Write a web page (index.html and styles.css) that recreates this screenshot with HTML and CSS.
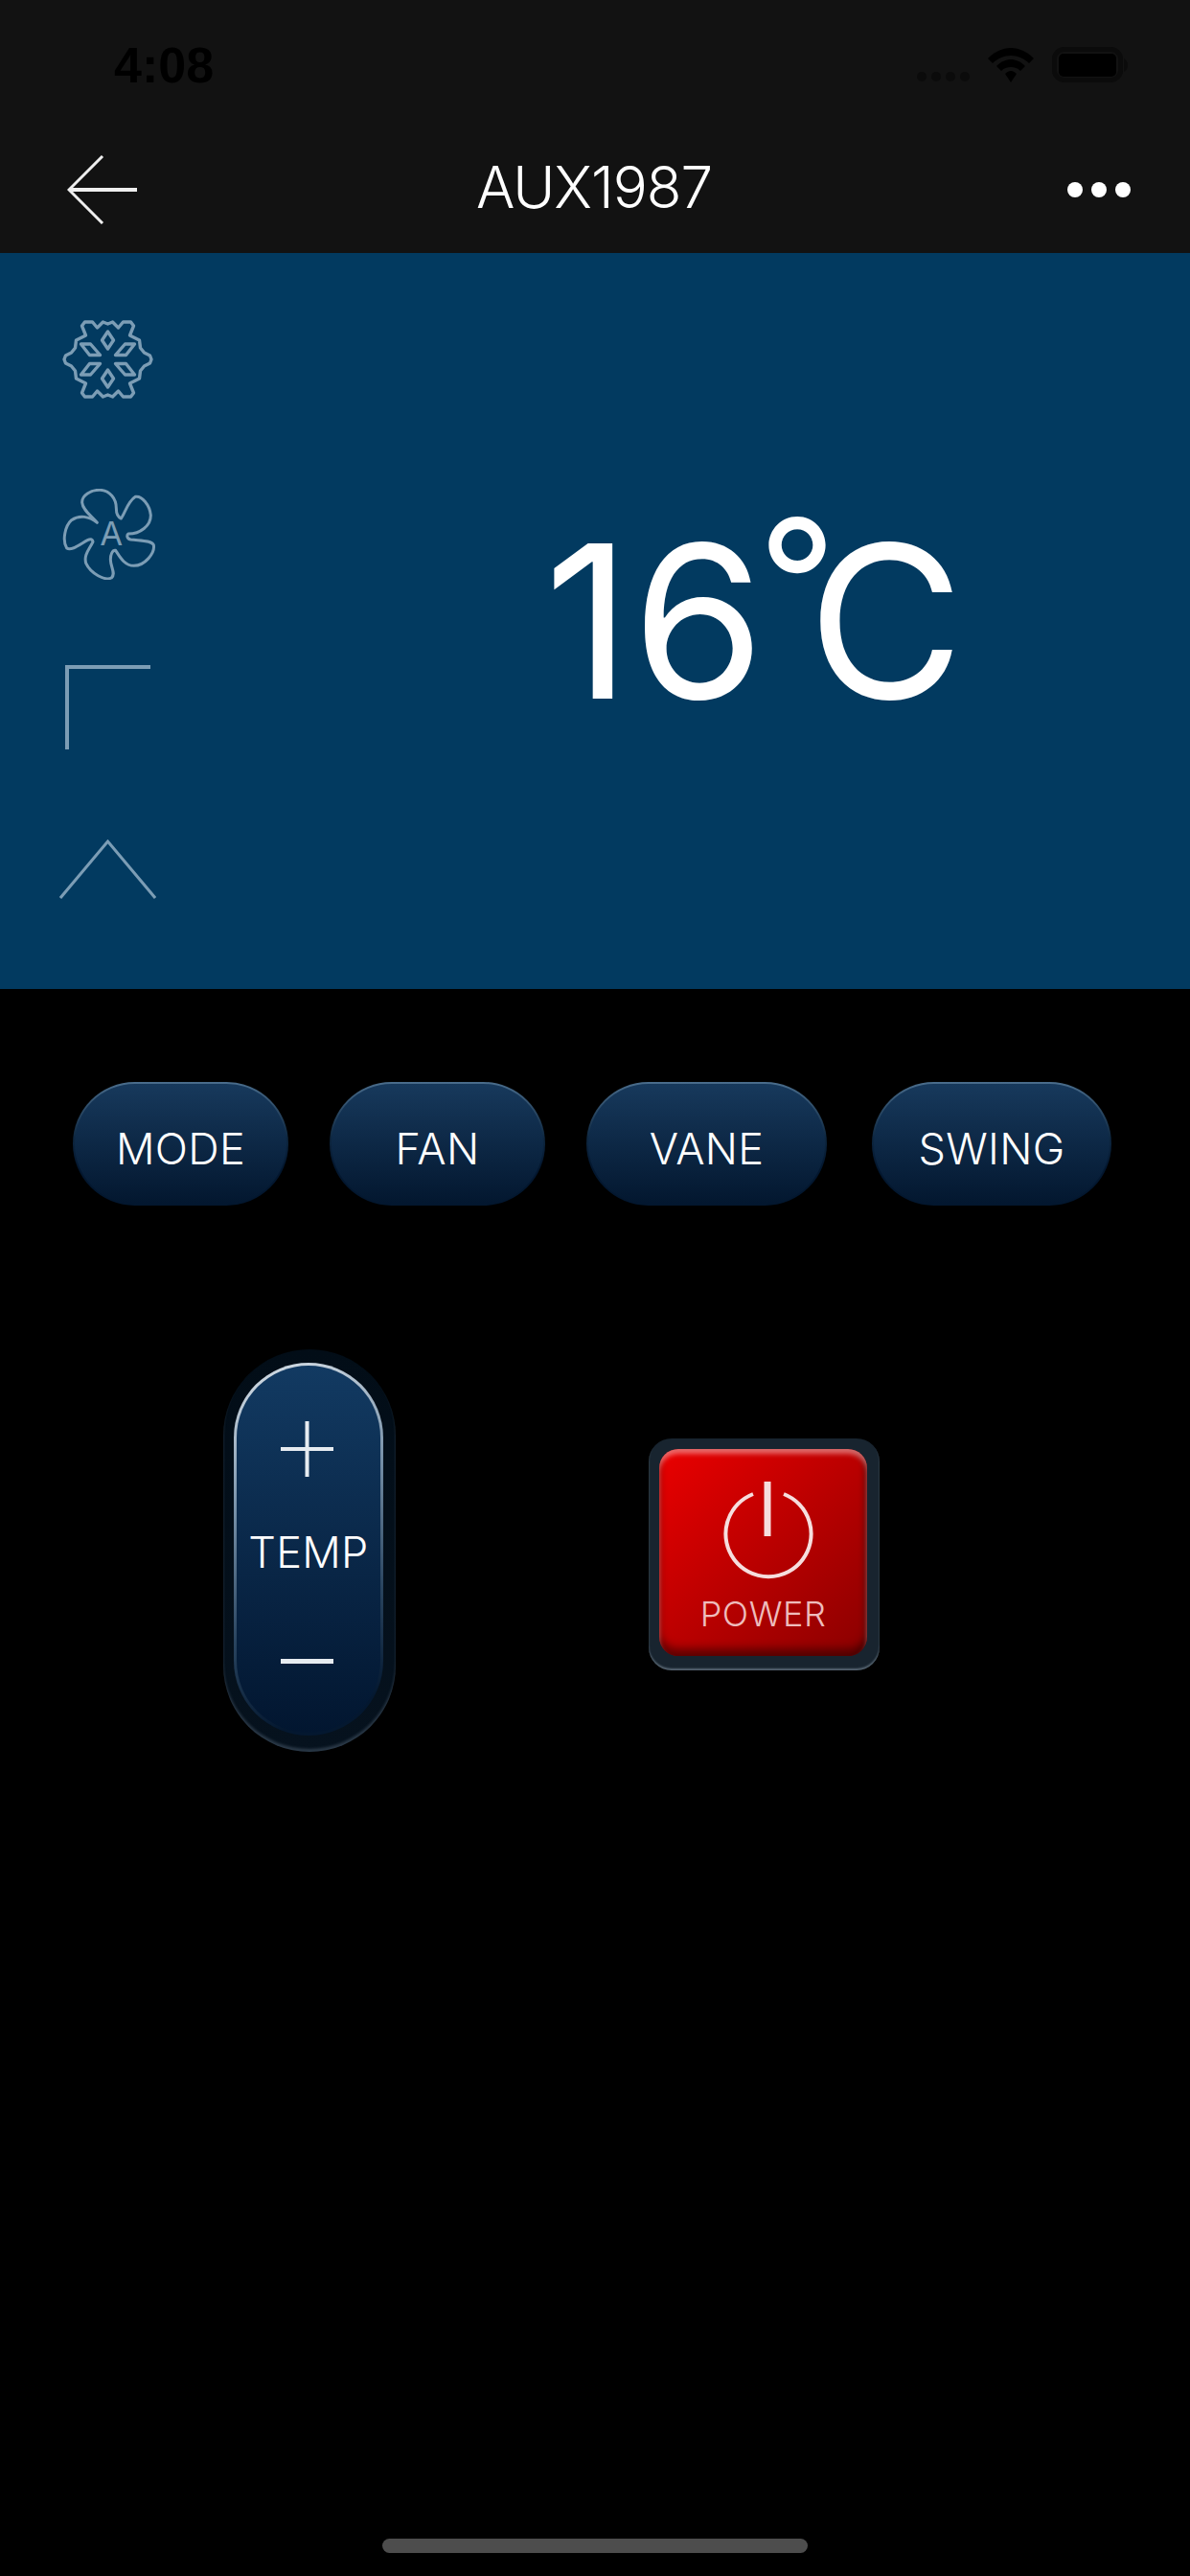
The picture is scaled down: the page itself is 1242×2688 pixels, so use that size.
FILE: index.html
```
<!DOCTYPE html>
<html lang="en">
<head>
    <meta charset="UTF-8">
    <meta name="viewport" content="width=device-width, initial-scale=1.0">
    <title>AUX1987</title>
    <link rel="stylesheet" href="styles.css">
</head>
<body>
    <div class="page">
        <div class="header">
            <div class="status">
                <span class="time">4:08</span>
                <svg class="status-icons" width="220" height="38" viewBox="0 0 220 38">
                    <circle cx="5" cy="31" r="5" fill="#0b0b0b"/>
                    <circle cx="20" cy="31" r="5" fill="#0b0b0b"/>
                    <circle cx="35" cy="31" r="5" fill="#0b0b0b"/>
                    <circle cx="50" cy="31" r="5" fill="#0b0b0b"/>
                    <path d="M98 1C107 1 115 5 122 12L117 17C112 12 105 9 98 9S84 12 79 17L74 12C81 5 89 1 98 1Z" fill="#000"/>
                    <path d="M98 13C103 13 108 15 113 20L108 25C105 22 102 21 98 21S91 22 88 25L83 20C88 15 93 13 98 13Z" fill="#000"/>
                    <path d="M98 25C100 25 102 26 104 28L98 37L92 28C94 26 96 25 98 25Z" fill="#000"/>
                    <rect x="143.5" y="2.5" width="69" height="32" rx="10" fill="none" stroke="#0b0b0b" stroke-width="5"/>
                    <rect x="148" y="7" width="60" height="24" rx="5" fill="#000"/>
                    <path d="M216 12C219 14 220 16 220 19S219 24 216 26Z" fill="#0b0b0b"/>
                </svg>
            </div>
            <div class="nav">
                <svg class="back" width="73" height="72" viewBox="0 0 73 72">
                    <path d="M37 1L2 36L37 71" fill="none" stroke="#eee" stroke-width="3"/>
                    <path d="M3 36H73" fill="none" stroke="#eee" stroke-width="4"/>
                </svg>
                <div class="title">AUX1987</div>
                <div class="more">
                    <span class="dot"></span>
                    <span class="dot"></span>
                    <span class="dot"></span>
                </div>
            </div>
        </div>

        <div class="panel">
            <div class="state-icons">
                <svg class="ic-snow" width="101" height="84" viewBox="-50.5 -42 101 84">
                    <g class="line-icon">
                        <path d="M0 -37L5 -39L11 -33L16 -39L24 -39L27 -35L23 -25L33 -20L34 -12L38 -7L44 -4L45.5 0L44 4L38 7L34 12L33 20L23 25L27 35L24 39L16 39L11 33L5 39L0 37L-5 39L-11 33L-16 39L-24 39L-27 35L-23 25L-33 20L-34 12L-38 7L-44 4L-45.5 0L-44 -4L-38 -7L-34 -12L-33 -20L-23 -25L-27 -35L-24 -39L-16 -39L-11 -33L-5 -39Z"/>
                        <path d="M0 -29L6 -20L0 -11L-6 -20Z"/>
                        <path d="M0 29L6 20L0 11L-6 20Z"/>
                        <path d="M8 -4.5L18 -16L28 -16L19 -4.5Z"/>
                        <path d="M-8 -4.5L-18 -16L-28 -16L-19 -4.5Z"/>
                        <path d="M8 4.5L18 16L28 16L19 4.5Z"/>
                        <path d="M-8 4.5L-18 16L-28 16L-19 4.5Z"/>
                    </g>
                </svg>
                <svg class="ic-fan" width="101" height="95" viewBox="92 629 303 285">
                    <path class="fan-blades" d="M210 735C190 712 165 695 163 672C162 650 190 632 220 633C250 635 270 660 270 690C270 705 275 718 285 722C298 705 305 670 330 654C350 650 375 680 378 712C378 745 345 770 308 770C302 775 303 785 315 788C345 792 380 790 387 805C392 830 360 870 325 870C295 870 280 840 268 822C258 820 252 835 252 850C252 875 270 895 255 908C235 918 190 895 175 862C168 835 185 820 197 795C195 785 188 786 180 790C160 800 130 825 115 815C100 790 110 745 130 727C155 710 185 715 210 735Z"/>
                    <text class="fan-letter" x="255" y="805" text-anchor="middle">A</text>
                </svg>
                <svg class="ic-corner" width="101" height="88" viewBox="0 0 101 88">
                    <path d="M8 88V2H95" fill="none" stroke="#7c9db5" stroke-width="4"/>
                </svg>
                <svg class="ic-chevron" width="101" height="62" viewBox="0 0 101 62">
                    <path d="M1 61L50.5 2L100 61" fill="none" stroke="#7c9db5" stroke-width="3"/>
                </svg>
            </div>
            <div class="temp-value"><span class="one">1</span><span class="six">6</span><span class="deg">°</span>C</div>
        </div>

        <div class="buttons">
            <div class="pill">MODE</div>
            <div class="pill">FAN</div>
            <div class="pill vane">VANE</div>
            <div class="pill swing">SWING</div>
        </div>

        <div class="controls">
            <div class="temp-shell">
                <div class="temp-btn">
                    <svg class="plus" width="55" height="58" viewBox="0 0 55 58">
                        <path d="M0 29H55M27.5 0V58" fill="none" stroke="#e6ebf0" stroke-width="4"/>
                    </svg>
                    <div class="temp-label">TEMP</div>
                    <div class="minus"></div>
                </div>
            </div>
            <div class="power-shell">
                <div class="power-btn">
                    <svg class="power-icon" width="96" height="104" viewBox="0 0 96 104">
                        <path d="M33 14A44.6 44.6 0 1 0 65 14" fill="none" stroke="#f6dede" stroke-width="4"/>
                        <path d="M48 1V58" fill="none" stroke="#f6dede" stroke-width="7"/>
                    </svg>
                    <div class="power-label">POWER</div>
                </div>
            </div>
        </div>

        <div class="home-bar"></div>
    </div>
</body>
</html>
```

FILE: styles.css
```
*{
    box-sizing: border-box;
}

body{
    margin: 0;
    background-color: #000;
    font-family: Inter, "Liberation Sans", sans-serif;
    font-weight: 300;
    color: #fff;
}

.page{
    display: flex;
    flex-direction: column;
    width: 1242px;
    height: 2688px;
    overflow: hidden;
    background-color: #000;
}

/* 顶部 */
.header{
    height: 264px;
    background-color: #121212;
}

.status{
    display: flex;
    justify-content: space-between;
    align-items: center;
    height: 120px;
    padding: 16px 65px 0 119px;
}

.time{
    font-family: "Liberation Sans", sans-serif;
    font-size: 52px;
    line-height: 52px;
    font-weight: bold;
    color: #000;
}

.nav{
    display: grid;
    grid-template-columns: 1fr auto 1fr;
    align-items: center;
    height: 144px;
    padding: 12px 62px 0 60px;
}

.back{
    margin-left: 10px;
}

.title{
    margin-bottom: 6px;
    font-size: 60px;
    line-height: 60px;
    font-weight: 350;
    letter-spacing: -1px;
}

.more{
    display: flex;
    justify-content: flex-end;
    gap: 9px;
}

.dot{
    width: 16px;
    height: 16px;
    border-radius: 50%;
    background-color: #fff;
}

/* 蓝色状态区 */
.panel{
    display: flex;
    height: 768px;
    padding: 69px 0 0 62px;
    background-color: #023a60;
}

.state-icons{
    display: flex;
    flex-direction: column;
    width: 101px;
}

.line-icon{
    fill: none;
    stroke: #7c9db5;
    stroke-width: 3.4;
    stroke-linejoin: round;
}

.ic-fan{
    margin-top: 93px;
}

.ic-corner{
    margin-top: 89px;
}

.ic-chevron{
    margin-top: 94px;
}

.fan-blades{
    fill: none;
    stroke: #7c9db5;
    stroke-width: 9;
    stroke-linejoin: round;
}

.fan-letter{
    font-size: 104px;
    font-weight: 400;
    fill: #7c9db5;
}

.temp-value{
    margin: 162px 0 0 405px;
    font-size: 223px;
    line-height: 221px;
    font-weight: 400;
    white-space: nowrap;
}

/* 数字之间的距离和字体默认的不一样，单独调 */
.one{
    letter-spacing: 1px;
}

.six{
    letter-spacing: -7px;
}

.deg{
    font-size: 180px;
    letter-spacing: -30px;
    vertical-align: 58px;
}

/* 功能按钮 */
.buttons{
    display: flex;
    gap: 43px;
    margin-top: 97px;
    padding-left: 76px;
}

.pill{
    display: flex;
    justify-content: center;
    align-items: center;
    width: 225px;
    height: 129px;
    padding-top: 9px;
    border: 2px solid transparent;
    border-radius: 65px;
    background: linear-gradient(#17395c, #03172f) padding-box, linear-gradient(#4a6d8c, #0e2740 45%, #03172f 70%) border-box;
    font-size: 45px;
    font-weight: 350;
    letter-spacing: 0.3px;
}

.vane{
    width: 251px;
}

.swing{
    width: 250px;
    margin-left: 4px;
}

.controls{
    display: flex;
    align-items: flex-start;
    gap: 264px;
    margin-top: 150px;
    padding-left: 233px;
}

.temp-shell{
    width: 180px;
    height: 420px;
    padding: 14px 13px 0 11px;
    border-radius: 90px;
    background: linear-gradient(#020d17, #06121e);
    box-shadow: inset 0 -3px 3px rgba(130, 150, 170, 0.3);
}

.temp-btn{
    display: flex;
    flex-direction: column;
    align-items: center;
    height: 389px;
    padding-top: 58px;
    border: 3px solid transparent;
    border-radius: 78px;
    background: linear-gradient(#123a62, #021630) padding-box, linear-gradient(160deg, #dbe3ea, #7690a8 35%, #2a4560 65%, #041830 90%) border-box;
}

.plus{
    margin-right: 4px;
}

.temp-label{
    margin-top: 54px;
    font-size: 45px;
    font-weight: 350;
    letter-spacing: 0.3px;
    line-height: 50px;
}

.minus{
    width: 55px;
    height: 5px;
    margin: 86px 4px 0 0;
    background-color: #e6ebf0;
}

.power-shell{
    width: 241px;
    height: 242px;
    margin-top: 93px;
    padding: 11px 13px 0 11px;
    border-radius: 24px;
    background-color: #18242f;
    box-shadow: inset 0 -2px 2px rgba(150, 165, 180, 0.5);
}

.power-btn{
    display: flex;
    flex-direction: column;
    align-items: center;
    width: 217px;
    height: 216px;
    padding-top: 33px;
    border-radius: 20px;
    background: linear-gradient(135deg, #ea0000, #8a0000);
    box-shadow: inset 0 5px 5px rgba(255, 190, 190, 0.55), inset 0 -8px 8px rgba(50, 0, 0, 0.6), inset -3px 0 5px rgba(50, 0, 0, 0.4);
}

.power-icon{
    margin-left: 8px;
}

.power-label{
    margin-top: 15px;
    font-size: 36px;
    line-height: 40px;
    letter-spacing: 0.5px;
    color: #eebcbc;
}

.home-bar{
    width: 444px;
    height: 15px;
    margin: 821px 0 0 399px;
    border-radius: 8px;
    background-color: #4d4d4d;
}
```
